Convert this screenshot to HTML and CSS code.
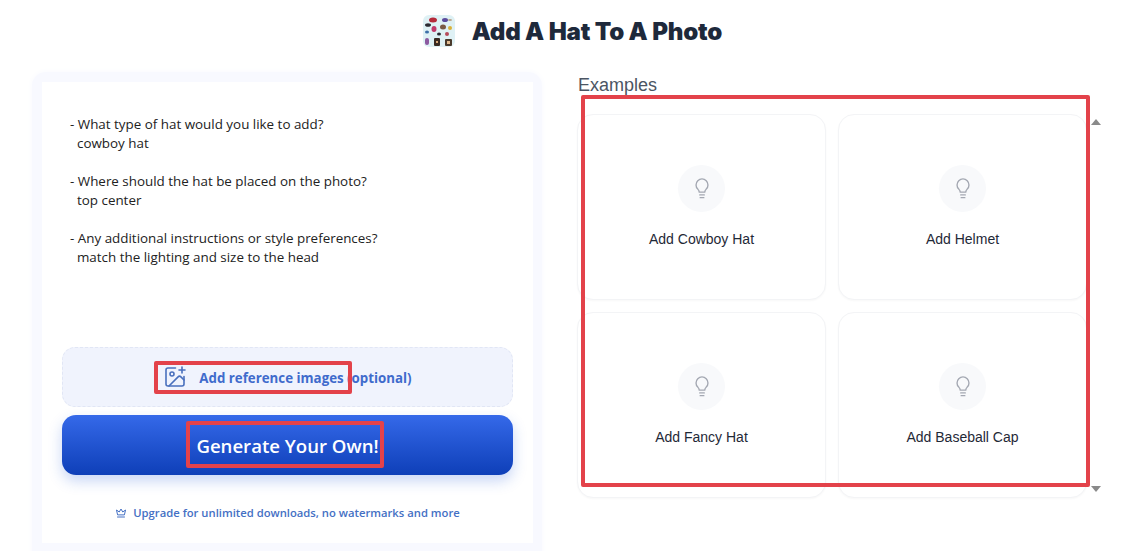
FILE: index.html
```html
<!DOCTYPE html>
<html lang="en">
<head>
    <meta charset="UTF-8">
    <meta name="viewport" content="width=device-width, initial-scale=1.0">
    <title>Add A Hat To A Photo</title>
    <link rel="stylesheet" href="styles.css">
</head>
<body>
    <header class="page-header">
        <svg class="logo" viewBox="0 0 32 32">
            <rect width="32" height="32" rx="6" fill="#dff1f5"/>
            <ellipse cx="10" cy="5" rx="4" ry="2.500" fill="#b52a3a"/>
            <ellipse cx="5" cy="10" rx="3" ry="1.800" fill="#2b2b33"/>
            <ellipse cx="22" cy="5" rx="3" ry="2" fill="#5b4a9c"/>
            <ellipse cx="27" cy="5" rx="2" ry="1" fill="#b9a58a"/>
            <ellipse cx="11" cy="14" rx="2.500" ry="3" fill="#c23a6b"/>
            <ellipse cx="20" cy="12" rx="3" ry="2.500" fill="#7a5a44"/>
            <ellipse cx="27" cy="13" rx="2" ry="2" fill="#d9b23a"/>
            <ellipse cx="4" cy="17" rx="2" ry="1.500" fill="#3c6fa8"/>
            <ellipse cx="16" cy="19" rx="2" ry="1.500" fill="#2b2b33"/>
            <ellipse cx="24" cy="19" rx="2" ry="2" fill="#b54a5a"/>
            <rect x="2" y="23" width="4" height="7" rx="2" fill="#8c5aa0"/>
            <rect x="11" y="23" width="6" height="8" rx="1" fill="#3a2a22"/>
            <rect x="13" y="26" width="2" height="2" fill="#d8a878"/>
            <rect x="22" y="24" width="7" height="7" rx="1" fill="#4a3a2c"/>
            <rect x="24" y="26" width="3" height="3" fill="#e2bc92"/>
        </svg>
        <h1 class="page-title">Add A Hat To A Photo</h1>
    </header>

    <main class="layout">
        <section class="panel">
            <div class="panel-inner">
                <div class="prompt">- What type of hat would you like to add?
  cowboy hat

- Where should the hat be placed on the photo?
  top center

- Any additional instructions or style preferences?
  match the lighting and size to the head</div>
                <div class="upload">
                    <svg class="upload-icon" viewBox="0 0 24 24">
                        <path d="M16 5h6M19 2v6"/>
                        <path d="M21 11.500V19a2 2 0 0 1-2 2H5a2 2 0 0 1-2-2V5a2 2 0 0 1 2-2h7.500"/>
                        <path d="M21 15l-3.086-3.086a2 2 0 0 0-2.828 0L6 21"/>
                        <circle cx="9" cy="9" r="2"/>
                    </svg>
                    <span>Add reference images (optional)</span>
                </div>
                <button class="generate">Generate Your Own!</button>
                <div class="upgrade">
                    <svg class="crown" viewBox="0 0 24 24">
                        <path d="M5 15 3 6l5.500 4L12 4l3.500 6L21 6l-2 9z"/>
                        <path d="M5 20h14"/>
                    </svg>
                    <span>Upgrade for unlimited downloads, no watermarks and more</span>
                </div>
            </div>
        </section>

        <section class="examples">
            <h2 class="examples-title">Examples</h2>
            <div class="examples-body">
                <div class="cards">
                    <div class="card">
                        <span class="bulb"><svg viewBox="0 0 24 24"><path d="M9 16.500c0-1.500-.7-2.300-1.600-3.300A6.500 6.500 0 1 1 16.600 13.200c-.9 1-1.600 1.800-1.600 3.300z"/><path d="M9.500 19.500h5M10 22.500h4"/></svg></span>
                        <span class="card-label">Add Cowboy Hat</span>
                    </div>
                    <div class="card">
                        <span class="bulb"><svg viewBox="0 0 24 24"><path d="M9 16.500c0-1.500-.7-2.300-1.600-3.300A6.500 6.500 0 1 1 16.600 13.200c-.9 1-1.600 1.800-1.600 3.300z"/><path d="M9.500 19.500h5M10 22.500h4"/></svg></span>
                        <span class="card-label">Add Helmet</span>
                    </div>
                    <div class="card">
                        <span class="bulb"><svg viewBox="0 0 24 24"><path d="M9 16.500c0-1.500-.7-2.300-1.600-3.300A6.500 6.500 0 1 1 16.600 13.200c-.9 1-1.600 1.800-1.600 3.300z"/><path d="M9.500 19.500h5M10 22.500h4"/></svg></span>
                        <span class="card-label">Add Fancy Hat</span>
                    </div>
                    <div class="card">
                        <span class="bulb"><svg viewBox="0 0 24 24"><path d="M9 16.500c0-1.500-.7-2.300-1.600-3.300A6.500 6.500 0 1 1 16.600 13.200c-.9 1-1.600 1.800-1.600 3.300z"/><path d="M9.500 19.500h5M10 22.500h4"/></svg></span>
                        <span class="card-label">Add Baseball Cap</span>
                    </div>
                </div>
                <div class="scrollbar">
                    <span class="arrow-up"></span>
                    <span class="arrow-down"></span>
                </div>
            </div>
        </section>
    </main>

    <div class="mark mark-upload"></div>
    <div class="mark mark-generate"></div>
    <div class="mark mark-examples"></div>
</body>
</html>
```

FILE: styles.css
```css
html, body {
    height: 100%;
}
body {
    margin: 0;
    position: relative;
    overflow: hidden;
    background: #fff;
    font-family: "Open Sans", "Noto Sans", sans-serif;
    color: #1f2937;
}
.page-header {
    height: 61px;
    padding: 1px 0 0 3px;
    box-sizing: border-box;
    display: flex;
    align-items: center;
    justify-content: center;
    gap: 17px;
}
.logo {
    width: 32px;
    height: 32px;
    margin-top: -1px;
    filter: blur(0.6px);
}
.page-title {
    margin: 0;
    font-family: Inter, sans-serif;
    font-size: 24.100px;
    font-weight: 900;
    letter-spacing: -0.2px;
    color: #1e293b;
}
.layout {
    display: flex;
    align-items: flex-start;
    gap: 35px;
    padding: 11px 0 0 32px;
}
.panel {
    width: 491px;
    padding: 10px 9px 30px 10px;
    flex-shrink: 0;
    background: #f8f9ff;
    border-radius: 14px;
    box-shadow: 0 0 6px #f8f9ff;
}
.panel-inner {
    height: 461px;
    box-sizing: border-box;
    padding: 33px 20px 0;
    display: flex;
    flex-direction: column;
    background: #fff;
}
.prompt {
    height: 232px;
    padding-left: 8px;
    white-space: pre-wrap;
    font-family: "Open Sans", sans-serif;
    font-size: 13.400px;
    line-height: 19px;
    color: #222;
}
.upload {
    height: 58px;
    display: flex;
    align-items: center;
    justify-content: center;
    gap: 12px;
    background: #f0f3fd;
    border: 1px dashed #e1e6f5;
    border-radius: 13px;
    font-size: 13.300px;
    font-weight: 700;
    color: #3f6bcc;
}
.upload span {
    padding-top: 2px;
}
.upload-icon {
    width: 24px;
    height: 24px;
    fill: none;
    stroke: #4a70bd;
    stroke-width: 1.600;
    stroke-linecap: round;
    stroke-linejoin: round;
}
.generate {
    height: 60px;
    margin-top: 8px;
    border: none;
    border-radius: 14px;
    background: linear-gradient(180deg, #3569e9 0%, #0e3fb8 100%);
    box-shadow: 0 6px 14px rgba(37, 90, 220, 0.25);
    color: #fff;
    font-family: "Open Sans", sans-serif;
    font-size: 18.600px;
    font-weight: 600;
}
.upgrade {
    margin-top: 30px;
    display: flex;
    align-items: center;
    justify-content: center;
    gap: 6px;
    font-size: 11.250px;
    font-weight: 600;
    color: #4470c4;
}
.crown {
    width: 12px;
    height: 12px;
    fill: none;
    stroke: #4470c4;
    stroke-width: 2;
    stroke-linejoin: round;
    stroke-linecap: round;
}
.examples {
    width: 526px;
    flex-shrink: 0;
}
.examples-title {
    margin: 3px 0 18px 1px;
    height: 21px;
    font-family: "Liberation Sans", Arial, sans-serif;
    font-size: 18px;
    line-height: 21px;
    font-weight: 400;
    color: #4b5563;
}
.examples-body {
    display: flex;
}
.cards {
    display: grid;
    grid-template-columns: 249px 249px;
    grid-auto-rows: 186px;
    gap: 12px;
}
.card {
    padding-bottom: 2px;
    box-sizing: border-box;
    display: flex;
    flex-direction: column;
    align-items: center;
    justify-content: center;
    gap: 19px;
    background: #fff;
    border: 1px solid #f3f4f6;
    border-radius: 16px;
    box-shadow: 0 1px 2px rgba(0, 0, 0, 0.03);
}
.bulb {
    width: 47px;
    height: 47px;
    display: flex;
    align-items: center;
    justify-content: center;
    border-radius: 50%;
    background: #f8f9fb;
}
.bulb svg {
    width: 22px;
    height: 22px;
    fill: none;
    stroke: #a4a8b2;
    stroke-width: 1.500;
    stroke-linecap: round;
    stroke-linejoin: round;
}
.card-label {
    font-family: "Liberation Sans", Arial, sans-serif;
    font-size: 14px;
    line-height: 17px;
    color: #1f2937;
}
.scrollbar {
    width: 15px;
    margin-left: 1px;
    padding: 5px 0;
    display: flex;
    flex-direction: column;
    align-items: center;
    justify-content: space-between;
    height: 373px;
}
.arrow-up {
    border-left: 5px solid transparent;
    border-right: 5px solid transparent;
    border-bottom: 6px solid #8a8a8a;
}
.arrow-down {
    border-left: 5px solid transparent;
    border-right: 5px solid transparent;
    border-top: 6px solid #8a8a8a;
}
/* red annotation boxes drawn on top of the shot */
.mark {
    position: absolute;
    box-sizing: border-box;
    border: 4px solid #e3424a;
    border-radius: 2px;
}
.mark-upload {
    left: 154px;
    top: 361px;
    width: 198px;
    height: 33px;
}
.mark-generate {
    left: 186px;
    top: 421px;
    width: 198px;
    height: 47px;
}
.mark-examples {
    left: 581px;
    top: 95px;
    width: 509px;
    height: 392px;
}
```
